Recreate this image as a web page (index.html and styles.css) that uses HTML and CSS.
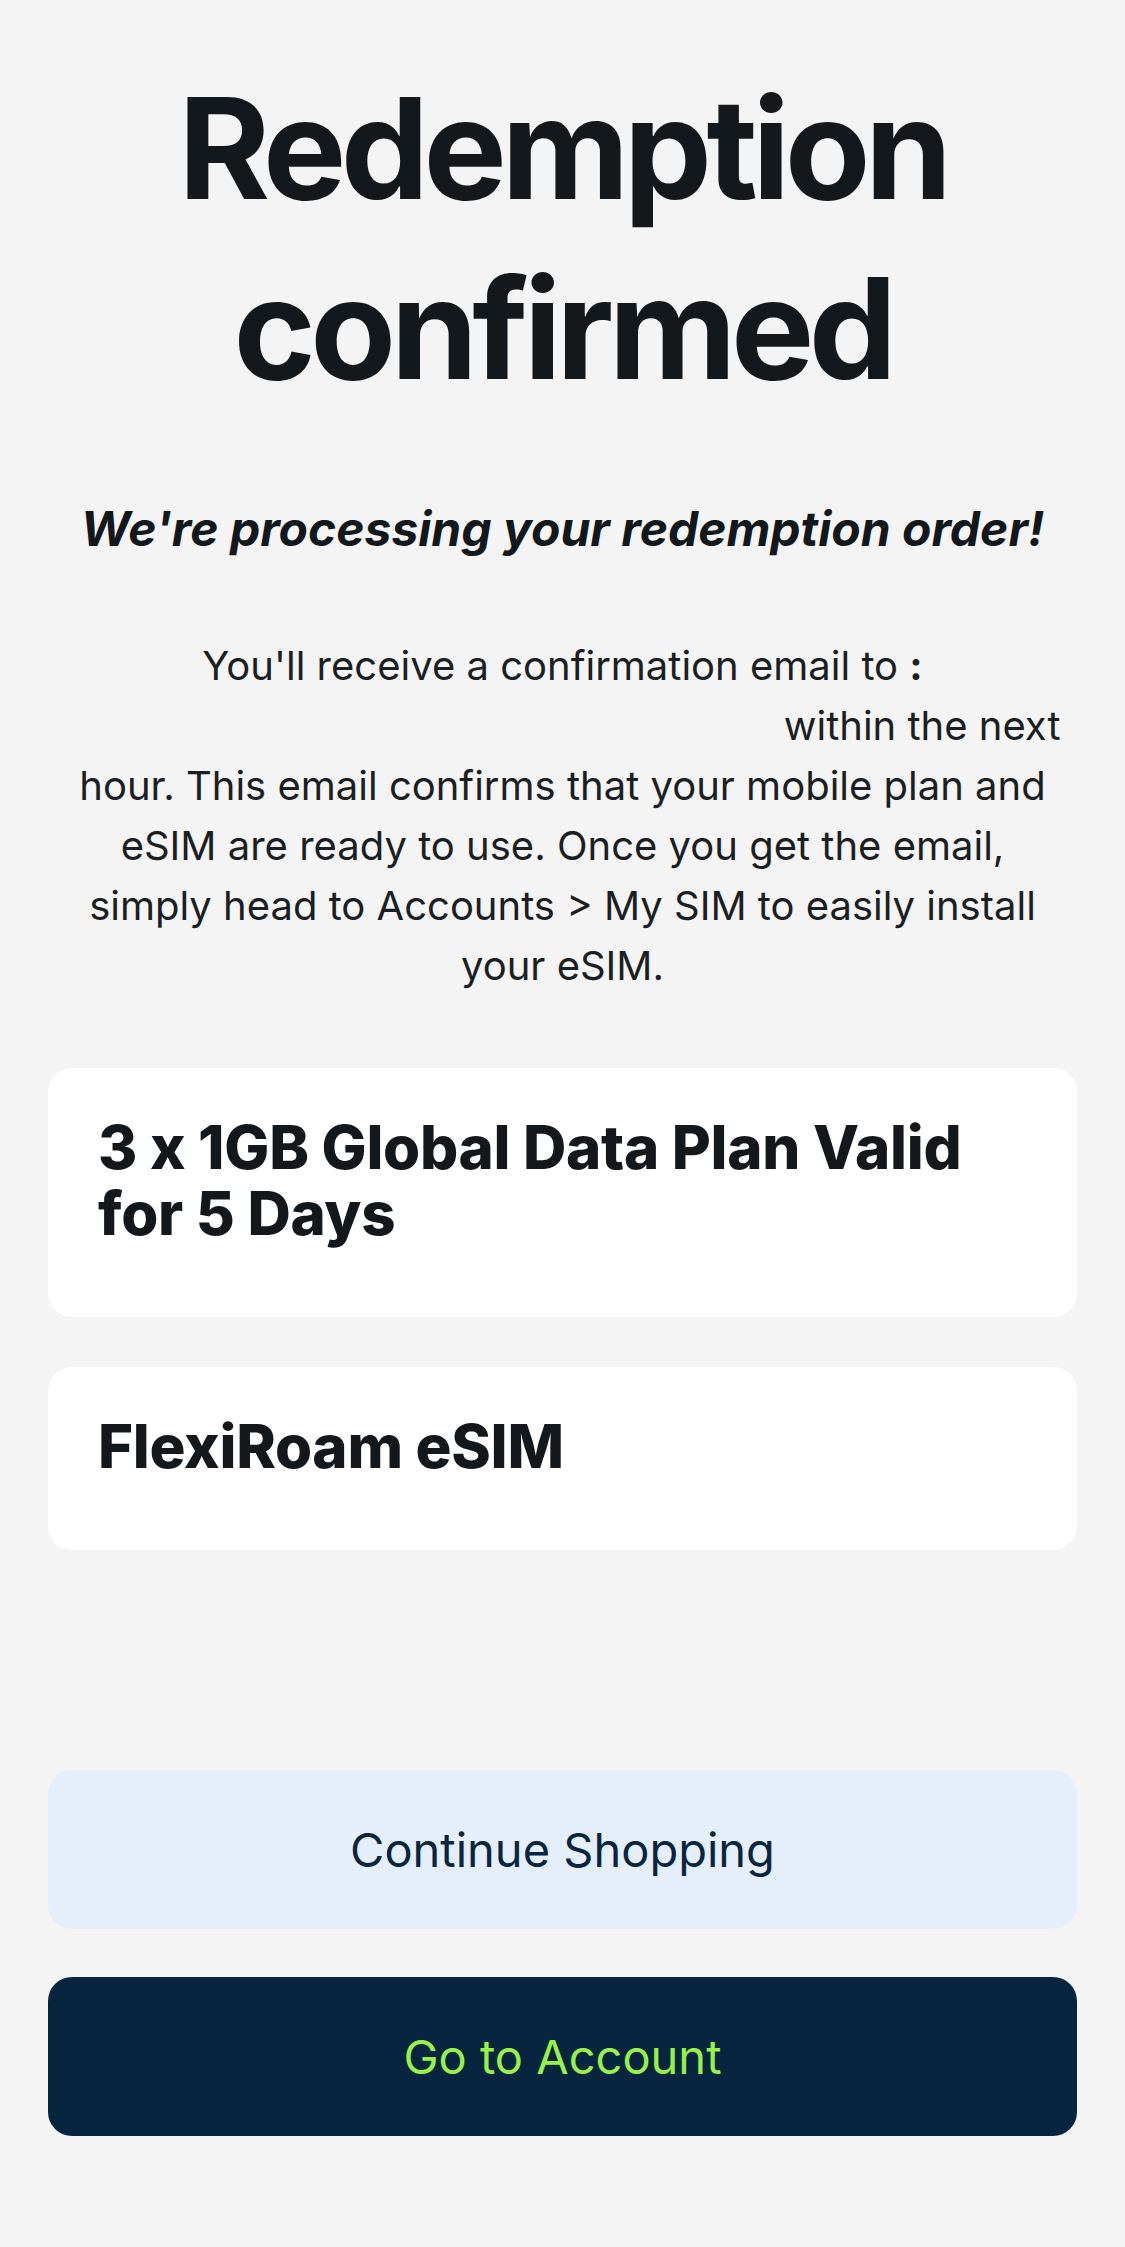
FILE: index.html
```html
<!DOCTYPE html>
<html lang="en">
<head>
<meta charset="utf-8">
<title>Redemption confirmed</title>
<link rel="stylesheet" href="styles.css">
</head>
<body>
<main class="page">
  <h1 class="title">Redemption confirmed</h1>
  <p class="lead">We're processing your redemption order!</p>
  <p class="info">You'll receive a confirmation email to <b>:</b> <span class="email"></span> within the next hour. This email confirms that your mobile plan and eSIM are ready to use. Once you get the email, simply head to Accounts &gt; My SIM to easily install your eSIM.</p>
  <section class="cards">
    <div class="card"><h2 class="card-title">3 x 1GB Global Data Plan Valid for 5 Days</h2></div>
    <div class="card"><h2 class="card-title">FlexiRoam eSIM</h2></div>
  </section>
  <div class="actions">
    <button class="btn btn-light">Continue Shopping</button>
    <button class="btn btn-dark">Go to Account</button>
  </div>
</main>
</body>
</html>
```
FILE: styles.css
```css
html, body {
  margin: 0;
  padding: 0;
  background: #f4f4f4;
}
body {
  font-family: Inter, "Noto Sans", "Liberation Sans", sans-serif;
  color: #13181d;
}
.page {
  width: 1125px;
  min-height: 2247px;
  box-sizing: border-box;
  padding: 0 48px 111px;
  display: flex;
  flex-direction: column;
}
.title {
  margin: 58px 0 0;
  font-size: 140px;
  line-height: 180px;
  font-weight: 700;
  letter-spacing: -5.5px;
  text-align: center;
  padding: 0 120px;
}
.lead {
  margin: 83px 0 0;
  font-size: 48px;
  line-height: 56px;
  font-weight: 700;
  font-style: italic;
  text-align: center;
  letter-spacing: 0;
}
.info {
  margin: 79px 0 0;
  padding: 0 10px;
  font-size: 40px;
  line-height: 60px;
  font-weight: 400;
  text-align: center;
  color: #1b1f23;
}
.info b {
  font-weight: 700;
}
.email {
  display: inline-block;
  width: 708px;
  height: 1px;
}
.cards {
  margin-top: 72px;
  display: flex;
  flex-direction: column;
  gap: 50px;
}
.card {
  background: #ffffff;
  border-radius: 24px;
  padding: 46px 50px 71px;
}
.card-title {
  margin: 0;
  font-size: 60px;
  line-height: 66px;
  font-weight: 800;
  letter-spacing: -0.3px;
}
.actions {
  margin-top: auto;
  display: flex;
  flex-direction: column;
  gap: 48px;
}
.btn {
  height: 159px;
  border: none;
  border-radius: 24px;
  font-family: Inter, "Noto Sans", "Liberation Sans", sans-serif;
  font-size: 47px;
  font-weight: 400;
  cursor: pointer;
}
.btn-light {
  background: #e5effb;
  color: #0a2540;
}
.btn-dark {
  background: #08253f;
  color: #98f04a;
}
```
